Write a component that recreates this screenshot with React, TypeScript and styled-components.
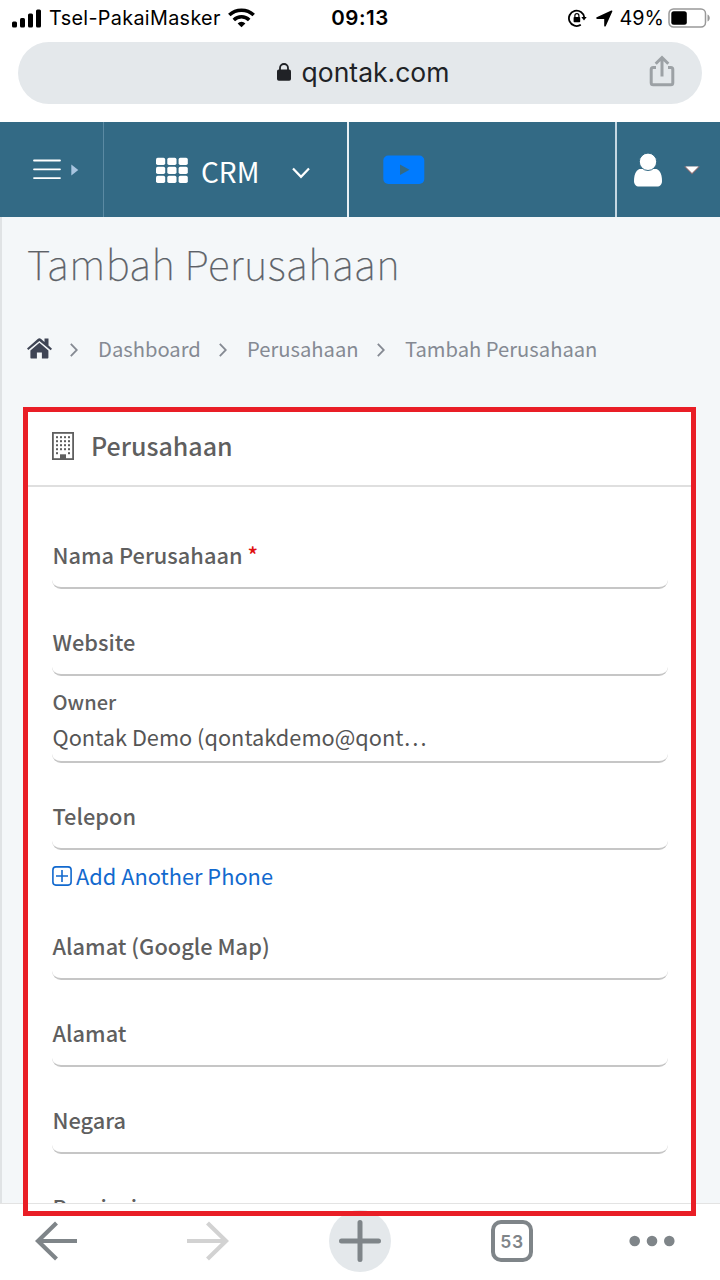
import React from "react";
import styled, { createGlobalStyle } from "styled-components";

const sans = `"Noto Sans CJK SC", "Noto Sans", sans-serif`;
const system = `Inter, Roboto, sans-serif`;

const GlobalStyle = createGlobalStyle`
  * { box-sizing: border-box; }
  body { margin: 0; background: #fff; overflow: hidden; }
  svg { display: block; flex: none; }
`;

const Screen = styled.div`
  position: relative;
  display: flex;
  flex-direction: column;
  width: 720px;
  height: 1280px;
  overflow: hidden;
  background: #fff;
  font-family: ${sans};
  white-space: nowrap;
`;

const StatusBar = styled.header`
  display: grid;
  grid-template-columns: 1fr auto 1fr;
  align-items: center;
  height: 36px;
  padding: 0 9px 0 11px;
  font-family: ${system};
  font-size: 19.8px;
  line-height: 36px;
  color: #000;
`;

const StatusGroup = styled.div<{ $end?: boolean }>`
  display: flex;
  align-items: center;
  justify-content: ${(p) => (p.$end ? "flex-end" : "flex-start")};
`;

const Carrier = styled.span`
  width: 171px;
  margin: 0 8px 0 7px;
  letter-spacing: 0.33px;
`;

const Clock = styled.time`
  margin: 0 2px 0 0;
  font-weight: 600;
  font-size: 20.5px;
  letter-spacing: 0.5px;
`;

const Percent = styled.span`
  margin: 0 4px 0 7px;
`;

const AddressBar = styled.div`
  display: flex;
  height: 86px;
  padding: 6px 18px 18px;
`;

const AddressPill = styled.div`
  display: grid;
  grid-template-columns: 1fr auto 1fr;
  align-items: center;
  flex: 1;
  padding: 0 27px;
  border-radius: 31px;
  background: #e4e8eb;
`;

const Host = styled.div`
  grid-column: 2;
  display: flex;
  align-items: center;
  gap: 11px;
  margin: 0 0 2px 6px;
  font-family: ${system};
  font-size: 26.5px;
  line-height: 40px;
  color: #202226;
`;

const ShareButton = styled.div`
  justify-self: end;
  margin-bottom: 4px;
`;

const Navbar = styled.nav`
  display: flex;
  height: 95px;
  background: #336a85;
  color: #fff;
`;

const NavCell = styled.div<{ $width?: number; $pad: number; $divider?: string }>`
  display: flex;
  align-items: center;
  flex: ${(p) => (p.$width ? `0 0 ${p.$width}px` : "1")};
  padding-left: ${(p) => p.$pad}px;
  padding-top: 1px;
  border-right: ${(p) => (p.$divider ? p.$divider : "none")};
`;

const AppName = styled.span`
  width: 59px;
  margin: 1px 32px 0 13px;
  font-size: 28px;
  font-weight: 400;
  line-height: 40px;
`;

const NavChevron = styled.div`
  padding-top: 5px;
`;

const Page = styled.main`
  flex: 1;
  min-height: 0;
  overflow: hidden;
  padding: 0 24px 0 22px;
  border-left: 2px solid #e0e3e5;
  background: #f4f7f9;
`;

const Title = styled.h1`
  margin: 20px 0 0 3px;
  font-size: 40.5px;
  font-weight: 100;
  line-height: 52px;
  letter-spacing: 0.43px;
  color: #5c6167;
  -webkit-text-stroke: 0.25px #5c6167;
`;

const Breadcrumb = styled.div`
  display: flex;
  align-items: center;
  height: 30px;
  margin: 45px 0 0 3px;
  font-size: 20.2px;
  line-height: 30px;
  color: #858a93;
`;

const HomeLink = styled.div`
  margin-bottom: 2px;
`;

const SeparatorSlot = styled.div`
  padding-top: 2px;
`;

const Crumb = styled.span<{ $width: number }>`
  width: ${(p) => p.$width}px;
  margin: 0 18px 1px 20px;
`;

const Card = styled.section`
  margin-top: 43px;
  height: 900px;
  background: #fff;
`;

const CardHead = styled.div`
  display: flex;
  align-items: center;
  gap: 17px;
  height: 80px;
  padding: 0 0 0 28px;
  border-bottom: 2px solid #dfdfdf;
`;

const CardTitle = styled.h2`
  margin: 0 0 2px;
  font-size: 25px;
  font-weight: 500;
  line-height: 36px;
  color: #5f5f5f;
`;

const Form = styled.div`
  display: flex;
  flex-direction: column;
  padding: 32px 0 0 28px;
  width: 644px;
`;

const Field = styled.div<{ $filled?: boolean }>`
  display: flex;
  flex-direction: column;
  justify-content: center;
  height: 70px;
  margin-bottom: 17px;
  padding: ${(p) => (p.$filled ? "0 0 14px 0.5px" : "4px 0 0 0.5px")};
  border-bottom: 2px solid #c6c6c6;
  border-radius: 9px;
`;

const Label = styled.label<{ $small?: boolean }>`
  font-size: ${(p) => (p.$small ? 20 : 21.8)}px;
  font-weight: 500;
  line-height: ${(p) => (p.$small ? 34 : 30)}px;
  color: #5f5f5f;
`;

const Required = styled.span`
  color: #e01010;
`;

const Value = styled.span`
  font-size: 21.75px;
  line-height: 36px;
  color: #555;
`;

const AddLink = styled.a`
  display: flex;
  align-items: center;
  gap: 4px;
  height: 30px;
  margin: -6px 0 19px;
  font-size: 21.8px;
  line-height: 30px;
  color: #1269ce;
`;

const Toolbar = styled.footer`
  display: flex;
  align-items: center;
  height: 77px;
  padding: 0 44px 2px 35px;
  border-top: 1px solid #e3e3e3;
  background: #fff;
`;

const ToolSlot = styled.div<{ $left?: number }>`
  margin-left: ${(p) => p.$left ?? 0}px;
`;

const NewTab = styled.div`
  display: flex;
  align-items: center;
  justify-content: center;
  width: 62px;
  height: 62px;
  margin-left: 100px;
  border-radius: 50%;
  background: #e4e8eb;
`;

const TabCount = styled.div`
  display: flex;
  align-items: center;
  justify-content: center;
  width: 42px;
  height: 42px;
  margin-left: 100px;
  border: 4px solid #7f8589;
  border-radius: 10px;
  font-family: ${system};
  font-size: 17.5px;
  font-weight: 600;
  letter-spacing: 0.8px;
  color: #7f8589;
`;

const Highlight = styled.div`
  position: absolute;
  left: 23px;
  top: 407px;
  width: 673px;
  height: 809px;
  border: 5px solid #e91e26;
  pointer-events: none;
`;

const Separator = () => (
  <SeparatorSlot>
    <svg width="8" height="14" viewBox="0 0 8 14" fill="none" stroke="#858a93" strokeWidth="1.8">
      <path d="M0.8 0.8 6.8 7 0.8 13.2" />
    </svg>
  </SeparatorSlot>
);

const Signal = () => (
  <svg width="31" height="19" viewBox="0 0 31 19">
    <rect x="1" y="12.5" width="5" height="6" rx="1.5" />
    <rect x="9" y="9" width="5" height="9.5" rx="1.5" />
    <rect x="17" y="4.5" width="5" height="14" rx="1.5" />
    <rect x="25" y="0.5" width="5" height="18" rx="1.5" />
  </svg>
);

const Wifi = () => (
  <svg width="27" height="20" viewBox="0 0 27 20" fill="none" stroke="#000" strokeWidth="3.5">
    <path d="M1.3 7.1a17.5 17.5 0 0 1 24.4 0" />
    <path d="M5.8 11.9a11 11 0 0 1 15.4 0" />
    <path d="M13.5 19.3 9.6 15.4a5.7 5.7 0 0 1 7.8 0Z" fill="#000" stroke="none" />
  </svg>
);

const RotationLock = () => (
  <svg width="19" height="18" viewBox="0 0 19 18">
    <path d="M12.8 15.8A7.7 7.7 0 1 1 16.3 8.5" fill="none" stroke="#000" strokeWidth="1.8" />
    <path d="M13.3 8h5.4L16 11.4Z" />
    <rect x="5.6" y="8" width="6.6" height="5.2" rx="0.8" />
    <path d="M6.9 8V6.6a2 2 0 0 1 4 0V8" fill="none" stroke="#000" strokeWidth="1.2" />
  </svg>
);

const Location = () => (
  <svg width="17" height="17" viewBox="0 0 17 17">
    <path d="M0.7 7.2 15.3 0.5c.8-.3 1.3.3 1 1L9.8 16c-.4.9-1.6.7-1.6-.3V9H1.2C0 9-.3 7.7.7 7.2Z" />
  </svg>
);

const Battery = () => (
  <svg width="43" height="20" viewBox="0 0 43 20">
    <rect x="1" y="1" width="36.5" height="18" rx="4.5" fill="none" stroke="#999" strokeWidth="1.5" />
    <rect x="3.3" y="3.3" width="15.5" height="13.4" rx="2.5" />
    <path d="M39.5 6.5c3 1.2 3 5.8 0 7Z" fill="#999" />
  </svg>
);

const Lock = () => (
  <svg width="14" height="18" viewBox="0 0 14 18">
    <rect x="0" y="6.5" width="14" height="11.2" rx="1.8" fill="#202226" />
    <path d="M3 7.5V5a4 4 0 0 1 8 0v2.5" fill="none" stroke="#202226" strokeWidth="1.8" />
  </svg>
);

const Share = () => (
  <svg width="26" height="32" viewBox="0 0 26 32" fill="none" stroke="#9ca1a5" strokeWidth="3">
    <path d="M7 12.5H4.2a2 2 0 0 0-2 2v13.3a2 2 0 0 0 2 2h17.6a2 2 0 0 0 2-2V14.5a2 2 0 0 0-2-2H19" />
    <path d="M13 21.5V2.5M6.7 8.8 13 2.5l6.3 6.3" />
  </svg>
);

const Menu = () => (
  <svg width="46" height="22" viewBox="0 0 46 22">
    <path d="M1 1.5h26M1 10.3h26M1 19.1h26" stroke="#fff" strokeWidth="1.8" strokeLinecap="round" />
    <path d="M38.3 5.5v11l7-5.5Z" fill="#a9c5e0" />
  </svg>
);

const Grid = () => (
  <svg width="32" height="26" viewBox="0 0 32 26" fill="#fff">
    {[0.8, 9.8, 18.8].map((y) =>
      [0, 11.3, 22.6].map((x) => <rect key={`${x}-${y}`} x={x} y={y} width="9.2" height="7.2" rx="1.7" />)
    )}
  </svg>
);

const Chevron = () => (
  <svg width="18" height="12" viewBox="0 0 18 12" fill="none" stroke="#fff" strokeWidth="2.2">
    <path d="M1 1.5 9 9.8 17 1.5" />
  </svg>
);

const Video = () => (
  <svg width="42" height="30" viewBox="0 0 42 30">
    <rect x="0.3" y="0.5" width="41" height="28.5" rx="5" fill="#007bff" />
    <path d="M17 9.5V20l9.5-5.25Z" fill="#336a85" />
  </svg>
);

const User = () => (
  <svg width="28" height="35" viewBox="0 0 28 35" fill="#fff">
    <path d="M5.5 16C1.5 17.500 0 22.500 0 28c0 3.500 2 5.500 5 5.500h18c3 0 5-2 5-5.500 0-5.500-1.500-10.500-5.500-12Z" />
    <circle cx="14" cy="8.8" r="8.700" stroke="#336a85" strokeWidth="1" />
  </svg>
);

const Caret = () => (
  <svg width="18" height="9" viewBox="0 0 18 9">
    <path d="M1 0.5h16L9 8.5Z" fill="#8b6f74" />
    <path d="M2.5 0.5h13L9 7Z" fill="#fff" />
  </svg>
);

const Home = () => (
  <svg width="25" height="21" viewBox="0 0 25 21" fill="#3f4555">
    <path d="M0 10.5 10.7.9c1-.9 2.4-.9 3.4 0L17.5 4V.5h4v7.1L25 10.7l-1.3 1.5L12.4 2.9 1.3 12Z" />
    <path d="M12.4 4.8 21.4 12.4v7.2c0 .7-.4 1-1 1h-5.5v-6h-5v6H4.4c-.7 0-1-.4-1-1v-7.2Z" />
  </svg>
);

const Building = () => (
  <svg width="22" height="28" viewBox="0 0 22 28">
    <rect x="0.9" y="0.9" width="20.2" height="26.2" fill="none" stroke="#5f5f5f" strokeWidth="1.8" />
    {[4.2, 8.2, 12.2, 16.2, 20.2].map((y) =>
      [4, 8, 12, 16].map((x) =>
        y > 20 && (x === 8 || x === 12) ? null : (
          <rect key={`${x}-${y}`} x={x} y={y} width="2" height="2" fill="#5f5f5f" />
        )
      )
    )}
    <path d="M8 22.3h6V28H8Z" fill="#5f5f5f" />
  </svg>
);

const PlusBox = () => (
  <svg width="20" height="20" viewBox="0 0 20 20" fill="none" stroke="#1269ce" strokeWidth="1.6">
    <rect x="0.9" y="0.9" width="18.2" height="18.2" rx="3" />
    <path d="M10 4v12M4 10h12" />
  </svg>
);

const Arrow = ({ color, forward }: { color: string; forward?: boolean }) => (
  <svg width="42" height="40" viewBox="0 0 42 40" fill="none" stroke={color} strokeWidth="4.2">
    <path d={forward ? "M0 20H39M20.5 2 39 20 20.5 38" : "M42 20H3M21.5 2 3 20 21.5 38"} />
  </svg>
);

const Plus = () => (
  <svg width="42" height="42" viewBox="0 0 42 42" stroke="#7f8589" strokeWidth="5" strokeLinecap="round">
    <path d="M21 2.5v37M2.5 21h37" />
  </svg>
);

const Dots = () => (
  <svg width="46" height="12" viewBox="0 0 46 12" fill="#7f8589">
    <circle cx="5.7" cy="6" r="5.3" />
    <circle cx="23" cy="6" r="5.3" />
    <circle cx="40.3" cy="6" r="5.3" />
  </svg>
);

export default function App() {
  return (
    <Screen>
      <GlobalStyle />
      <StatusBar>
        <StatusGroup>
          <Signal />
          <Carrier>Tsel-PakaiMasker</Carrier>
          <Wifi />
        </StatusGroup>
        <Clock>09:13</Clock>
        <StatusGroup $end>
          <RotationLock />
          <ToolSlot $left={9}>
            <Location />
          </ToolSlot>
          <Percent>49%</Percent>
          <Battery />
        </StatusGroup>
      </StatusBar>

      <AddressBar>
        <AddressPill>
          <Host>
            <Lock />
            <span>qontak.com</span>
          </Host>
          <ShareButton>
            <Share />
          </ShareButton>
        </AddressPill>
      </AddressBar>

      <Navbar>
        <NavCell $width={104} $pad={33} $divider="1px solid #5b8aa3">
          <Menu />
        </NavCell>
        <NavCell $width={245} $pad={52} $divider="2px solid #e8f0f4">
          <Grid />
          <AppName>CRM</AppName>
          <NavChevron>
            <Chevron />
          </NavChevron>
        </NavCell>
        <NavCell $pad={34} $divider="2px solid #c5d8e3">
          <Video />
        </NavCell>
        <NavCell $width={103} $pad={17}>
          <User />
          <ToolSlot $left={21}>
            <Caret />
          </ToolSlot>
        </NavCell>
      </Navbar>

      <Page>
        <Title>Tambah Perusahaan</Title>
        <Breadcrumb>
          <HomeLink>
            <Home />
          </HomeLink>
          <ToolSlot $left={18}>
            <Separator />
          </ToolSlot>
          <Crumb $width={103}>Dashboard</Crumb>
          <Separator />
          <Crumb $width={112}>Perusahaan</Crumb>
          <Separator />
          <Crumb $width={192}>Tambah Perusahaan</Crumb>
        </Breadcrumb>
        <Card>
          <CardHead>
            <Building />
            <CardTitle>Perusahaan</CardTitle>
          </CardHead>
          <Form>
            <Field>
              <Label>
                Nama Perusahaan <Required>*</Required>
              </Label>
            </Field>
            <Field>
              <Label>Website</Label>
            </Field>
            <Field $filled>
              <Label $small>Owner</Label>
              <Value>Qontak Demo (qontakdemo@qont…</Value>
            </Field>
            <Field>
              <Label>Telepon</Label>
            </Field>
            <AddLink>
              <PlusBox />
              Add Another Phone
            </AddLink>
            <Field>
              <Label>Alamat (Google Map)</Label>
            </Field>
            <Field>
              <Label>Alamat</Label>
            </Field>
            <Field>
              <Label>Negara</Label>
            </Field>
            <Field>
              <Label>Provinsi</Label>
            </Field>
          </Form>
        </Card>
      </Page>

      <Toolbar>
        <Arrow color="#7f8589" />
        <ToolSlot $left={110}>
          <Arrow color="#d2d2d2" forward />
        </ToolSlot>
        <NewTab>
          <Plus />
        </NewTab>
        <TabCount>53</TabCount>
        <ToolSlot $left={96}>
          <Dots />
        </ToolSlot>
      </Toolbar>

      <Highlight />
    </Screen>
  );
}
